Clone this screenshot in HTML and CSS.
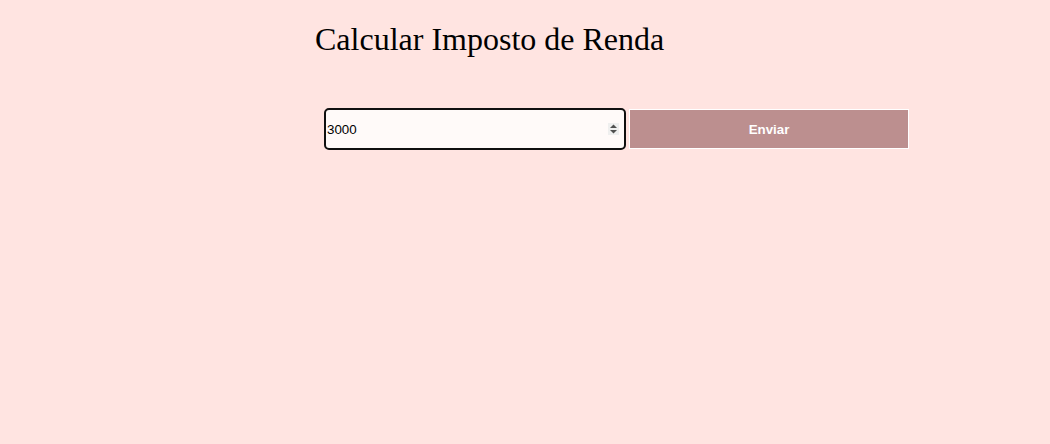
FILE: index.html
```html
<!DOCTYPE html>
<html lang="pt-BR">
<head>
<meta charset="utf-8">
<title>Calcular Imposto de Renda</title>
<link rel="stylesheet" href="styles.css">
</head>
<body>
<main class="page">
  <h1 class="title">Calcular Imposto de Renda</h1>
  <form class="form">
    <div class="field">
      <input class="value" type="text" value="3000">
      <span class="spin">
        <svg width="11" height="12" viewBox="0 0 11 12"><path d="M5.5 1.5 L9 5 L2 5 Z" fill="#505050"/><path d="M2 7 L9 7 L5.5 10.5 Z" fill="#505050"/></svg>
      </span>
    </div>
    <button class="send" type="button">Enviar</button>
  </form>
</main>
</body>
</html>
```
FILE: styles.css
```css
html, body {
  background: #ffe4e1;
}
body {
  margin: 0;
  padding: 8px;
  font-family: "Liberation Serif", "Times New Roman", serif;
}
.page {
  width: 420px;
  margin: 0 auto;
}
.title {
  font-size: 32px;
  line-height: 37px;
  font-weight: normal;
  margin: 12.5px 0 0;
  white-space: nowrap;
  color: #000;
}
.form {
  display: flex;
  align-items: center;
  gap: 3px;
  margin: 50.5px 0 0 9px;
  width: 590px;
}
.field {
  box-sizing: border-box;
  width: 302px;
  height: 42px;
  border: 2px solid #101010;
  border-radius: 5px;
  background: #fffaf9;
  display: flex;
  align-items: center;
  padding: 0 5px 0 1px;
}
.value {
  flex: 1;
  min-width: 0;
  border: none;
  outline: none;
  background: transparent;
  padding: 0;
  margin: 0;
  font-family: "Liberation Sans", Arial, sans-serif;
  font-size: 13.33px;
  color: #000;
}
.spin {
  width: 11px;
  height: 12px;
  background: #efefef;
  display: flex;
}
.send {
  box-sizing: border-box;
  width: 280px;
  height: 40px;
  border: 1px solid #fff;
  background: #bc8f8f;
  color: #fff;
  font-family: "Liberation Sans", Arial, sans-serif;
  font-size: 13.33px;
  font-weight: bold;
  padding: 0;
  margin: 0;
}
```
